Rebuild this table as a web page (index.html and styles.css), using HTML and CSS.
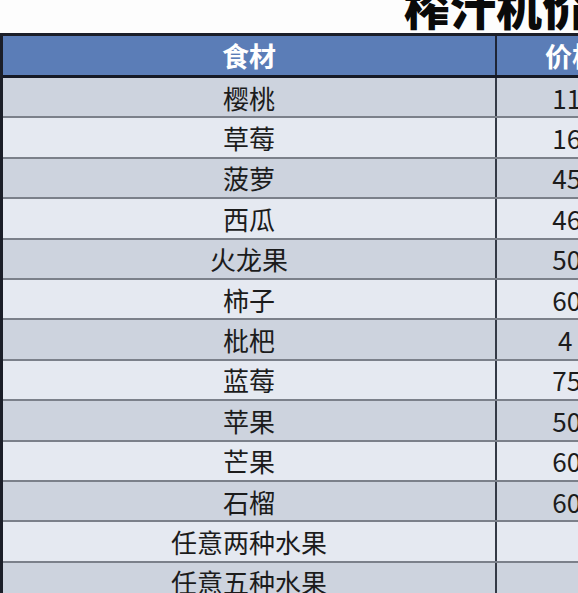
FILE: index.html
```html
<!DOCTYPE html>
<html lang="zh">
<head>
<meta charset="utf-8">
<link rel="stylesheet" href="styles.css">
</head>
<body>
<div class="page">
  <div class="title"><span class="title-text">榨汁机价格表</span></div>
  <div class="table">
    <div class="row head"><div class="cell name">食材</div><div class="cell price">价格</div></div>
    <div class="row dark"><div class="cell name">樱桃</div><div class="cell price">118</div></div>
    <div class="row light"><div class="cell name">草莓</div><div class="cell price">168</div></div>
    <div class="row dark"><div class="cell name">菠萝</div><div class="cell price">458</div></div>
    <div class="row light"><div class="cell name">西瓜</div><div class="cell price">468</div></div>
    <div class="row dark"><div class="cell name">火龙果</div><div class="cell price">508</div></div>
    <div class="row light"><div class="cell name">柿子</div><div class="cell price">608</div></div>
    <div class="row dark"><div class="cell name">枇杷</div><div class="cell price">4&nbsp;&nbsp;&nbsp;</div></div>
    <div class="row light"><div class="cell name">蓝莓</div><div class="cell price">758</div></div>
    <div class="row dark"><div class="cell name">苹果</div><div class="cell price">508</div></div>
    <div class="row light"><div class="cell name">芒果</div><div class="cell price">608</div></div>
    <div class="row dark"><div class="cell name">石榴</div><div class="cell price">608</div></div>
    <div class="row light"><div class="cell name">任意两种水果</div><div class="cell price"></div></div>
    <div class="row dark"><div class="cell name">任意五种水果</div><div class="cell price"></div></div>
  </div>
</div>
</body>
</html>
```
FILE: styles.css
```css
html, body {
  margin: 0;
  padding: 0;
  background: #ffffff;
  overflow: hidden;
}
.page {
  width: 1000px;
  font-family: "Noto Sans CJK SC", "Noto Sans", sans-serif;
}
.title {
  height: 33px;
  overflow: hidden;
  background: #fdfdfd;
}
.title-text {
  display: block;
  margin-top: -18px;
  padding-left: 404px;
  font-size: 46px;
  line-height: 46px;
  font-weight: 900;
  color: #0a0a0a;
  white-space: nowrap;
}
.table {
  border-top: 3px solid #1b1e28;
  border-left: 3px solid #1b1e28;
}
.row {
  display: grid;
  grid-template-columns: 494px 150px;
  height: 40.4px;
  box-sizing: border-box;
  border-bottom: 2px solid #7b808a;
}
.cell {
  display: flex;
  align-items: center;
  justify-content: center;
  font-size: 26px;
  color: #1c1c1c;
  white-space: pre;
}
.name {
  border-right: 2px solid #343a46;
}
.price {
  padding-left: 4px;
}
.head {
  height: 42px;
  background: #5b7db7;
  border-bottom: 3px solid #161a26;
}
.head .cell {
  color: #ffffff;
  font-weight: 700;
  font-size: 27px;
}
.head .price {
  padding-left: 0;
}
.head .name {
  border-right-color: #1e2536;
}
.dark {
  background: #cdd3de;
}
.light {
  background: #e5e9f1;
}
```
